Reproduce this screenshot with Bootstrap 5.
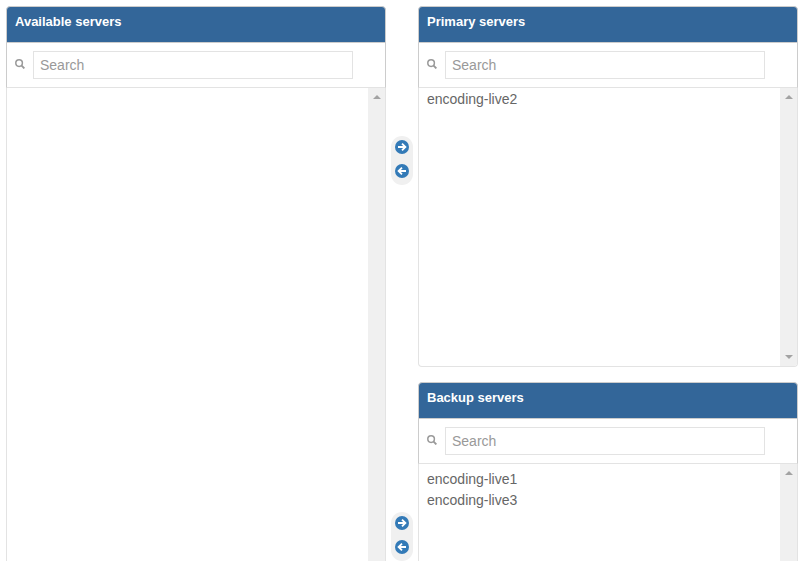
<!DOCTYPE html>
<html lang="en">
<head>
<meta charset="utf-8">
<title>Servers</title>
<link rel="stylesheet" href="https://cdn.jsdelivr.net/npm/bootstrap@5.3.0/dist/css/bootstrap.min.css">
<style>
html,body{height:561px;overflow:hidden;background:#fff}
body{font-family:"Liberation Sans",Arial,sans-serif;font-size:14px;color:#666}
.shell{padding:6px 7px 0 6px;height:561px;overflow:hidden}
.side{width:380px;flex:none}
.mid{width:32px;flex:none}
.stack{width:380px;flex:none;gap:15px}
.box-l{height:640px}
.box-t{height:361px;flex:none}
.box-b{height:300px;flex:none}
.head{background:#336699;color:#fff;font-weight:700;font-size:13px;height:37px;padding:7px 8px;line-height:16px;flex:none;border:1px solid #ccc;border-radius:4px 4px 0 0}
.seek{height:45px;padding:8px 32px 8px 8px;border:1px solid #ccc;border-top:0;border-bottom-color:#e3e3e3;gap:8px;flex:none}
.seek svg{flex:none;margin-top:-2px}
.seek input{height:28px;border:1px solid #e3e3e3;border-radius:0;padding:0 6px;font-size:14px;color:#555;box-shadow:none;font-family:inherit}
.seek input::placeholder{color:#999;opacity:1}
.lst{min-height:0;flex:1 1 auto;border:1px solid #e3e3e3;border-top:0;border-radius:0 0 4px 4px;overflow:hidden}
.items{padding:1px 8px;line-height:21px;font-size:14px;color:#666}
.items-low{padding-top:5px}
.sbar{width:17px;flex:none;background:#f0f0f0;padding:7px 0}
.tri-u{width:0;height:0;border:4px solid transparent;border-top:0;border-bottom:4px solid #a3a3a3}
.tri-d{width:0;height:0;border:4px solid transparent;border-bottom:0;border-top:4px solid #a3a3a3}
.pill{width:22px;background:#f0f0f0;border-radius:11px;padding:4px 4px 7px;gap:10px;margin-left:5px}
.pill-a{margin-top:130px}
.pill-b{margin-top:327px}
.pill svg{display:block}
</style>
</head>
<body>
<div class="d-flex shell">
  <div class="side">
    <div class="box-l d-flex flex-column">
      <div class="head">Available servers</div>
      <div class="seek d-flex align-items-center">
        <svg width="10" height="10" viewBox="0 0 10 10"><circle cx="4.1" cy="4.1" r="3.3" fill="none" stroke="#999" stroke-width="1.5"/><path d="M6.6 6.6 9.4 9.4" stroke="#999" stroke-width="1.9"/></svg>
        <input class="form-control" type="text" placeholder="Search">
      </div>
      <div class="lst d-flex">
        <div class="items flex-grow-1"></div>
        <div class="sbar d-flex flex-column align-items-center"><div class="tri-u"></div></div>
      </div>
    </div>
  </div>
  <div class="mid">
    <div class="pill pill-a d-flex flex-column">
      <svg width="14" height="14" viewBox="0 0 14 14"><circle cx="7" cy="7" r="7" fill="#337ab7"/><path d="M3 7h7M7 3.7 10.4 7 7 10.3" fill="none" stroke="#fff" stroke-width="1.8"/></svg>
      <svg width="14" height="14" viewBox="0 0 14 14"><circle cx="7" cy="7" r="7" fill="#337ab7"/><path d="M11 7H4M7 3.7 3.6 7 7 10.3" fill="none" stroke="#fff" stroke-width="1.8"/></svg>
    </div>
    <div class="pill pill-b d-flex flex-column">
      <svg width="14" height="14" viewBox="0 0 14 14"><circle cx="7" cy="7" r="7" fill="#337ab7"/><path d="M3 7h7M7 3.7 10.4 7 7 10.3" fill="none" stroke="#fff" stroke-width="1.8"/></svg>
      <svg width="14" height="14" viewBox="0 0 14 14"><circle cx="7" cy="7" r="7" fill="#337ab7"/><path d="M11 7H4M7 3.7 3.6 7 7 10.3" fill="none" stroke="#fff" stroke-width="1.8"/></svg>
    </div>
  </div>
  <div class="stack d-flex flex-column">
    <div class="box-t d-flex flex-column">
      <div class="head">Primary servers</div>
      <div class="seek d-flex align-items-center">
        <svg width="10" height="10" viewBox="0 0 10 10"><circle cx="4.1" cy="4.1" r="3.3" fill="none" stroke="#999" stroke-width="1.5"/><path d="M6.6 6.6 9.4 9.4" stroke="#999" stroke-width="1.9"/></svg>
        <input class="form-control" type="text" placeholder="Search">
      </div>
      <div class="lst d-flex">
        <div class="items flex-grow-1">encoding-live2</div>
        <div class="sbar d-flex flex-column align-items-center justify-content-between"><div class="tri-u"></div><div class="tri-d"></div></div>
      </div>
    </div>
    <div class="box-b d-flex flex-column">
      <div class="head">Backup servers</div>
      <div class="seek d-flex align-items-center">
        <svg width="10" height="10" viewBox="0 0 10 10"><circle cx="4.1" cy="4.1" r="3.3" fill="none" stroke="#999" stroke-width="1.5"/><path d="M6.6 6.6 9.4 9.4" stroke="#999" stroke-width="1.9"/></svg>
        <input class="form-control" type="text" placeholder="Search">
      </div>
      <div class="lst d-flex">
        <div class="items items-low flex-grow-1">encoding-live1<br>encoding-live3</div>
        <div class="sbar d-flex flex-column align-items-center"><div class="tri-u"></div></div>
      </div>
    </div>
  </div>
</div>
</body>
</html>
